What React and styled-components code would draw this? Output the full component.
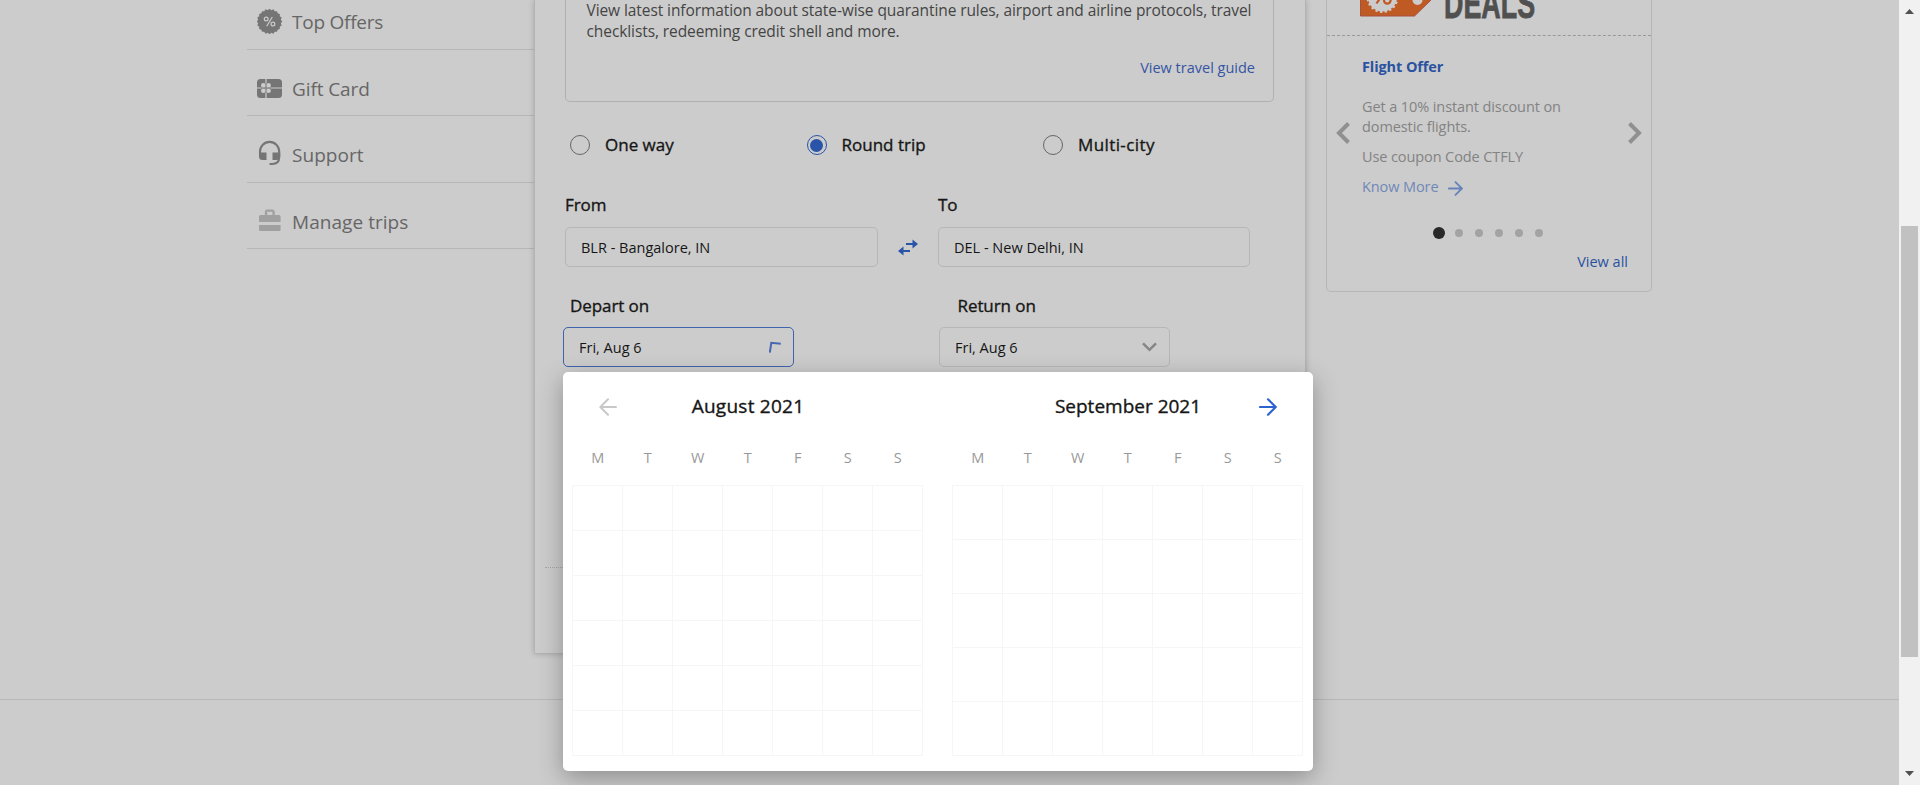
import React from 'react';
import styled, { createGlobalStyle, css } from 'styled-components';

const GlobalStyle = createGlobalStyle`
  * { box-sizing: border-box; }
  body { margin: 0; background: #ccc; overflow: hidden; }
`;

const semibold = css`
  font-weight: 500;
  -webkit-text-stroke: 0.35px currentColor;
`;

const Page = styled.div`
  position: relative;
  display: flex;
  width: 1920px;
  height: 785px;
  overflow: hidden;
  background: #ccc;
  color: #161616;
  font-family: 'Open Sans', 'Noto Sans', sans-serif;
  white-space: nowrap;
`;

const Main = styled.main`
  width: 1899px;
`;

const Columns = styled.div`
  display: flex;
  align-items: flex-start;
  height: 700px;
  padding-left: 247px;
  border-bottom: 1px solid #b8b8b8;
`;

const Sidebar = styled.nav`
  width: 287px;
`;

const NavItem = styled.a`
  display: flex;
  align-items: center;
  height: ${(p) => p.$height}px;
  padding: ${(p) => p.$top}px 0 ${(p) => p.$bottom || 0}px 10px;
  border-bottom: 1px solid #b6b6b6;
  color: #666;
  font-size: 19px;
  line-height: 26px;
  letter-spacing: ${(p) => p.$spacing}px;

  svg { margin: 0 9px ${(p) => p.$lift || 0}px 0; flex: none; }
`;

const SearchCard = styled.section`
  width: 772px;
  height: 654px;
  padding-left: 30px;
  border: 1px solid #b4b4b4;
  border-top: 0;
  box-shadow: 0 0 6px rgba(0, 0, 0, 0.2);
`;

const GuideBox = styled.div`
  width: 709px;
  height: 102px;
  padding: 0 18px 0 20.5px;
  border: 1px solid #b0b0b0;
  border-top: 0;
  border-radius: 0 0 5px 5px;
`;

const GuideText = styled.p`
  margin: 0;
  color: #444;
  font-size: 15.5px;
  line-height: 21px;
  letter-spacing: -0.085px;
`;

const GuideLink = styled.a`
  display: block;
  margin-top: 16px;
  color: #3555a4;
  font-size: 14.5px;
  line-height: 20px;
  text-align: right;
`;

const TripTypes = styled.div`
  display: flex;
  margin-top: 33px;
  padding-left: 5px;
`;

const TripType = styled.label`
  display: flex;
  align-items: center;
  gap: 15px;
  width: 236.5px;
  height: 20px;
  font-size: 17px;
  line-height: 20px;
  letter-spacing: ${(p) => p.$spacing || 0}px;
  ${semibold}
`;

const Radio = styled.span`
  width: 20px;
  height: 20px;
  padding: 2.5px;
  border: 1px solid ${(p) => (p.$checked ? '#2a54a8' : '#666')};
  border-radius: 50%;

  &::after {
    content: '';
    display: block;
    width: 13px;
    height: 13px;
    border-radius: 50%;
    background: ${(p) => (p.$checked ? '#2a54a8' : 'transparent')};
  }
`;

const RouteRow = styled.div`
  display: grid;
  grid-template-columns: 313px 60px 312px;
  align-items: end;
  margin-top: 38px;
`;

const DateRow = styled.div`
  display: flex;
  gap: 145px;
  margin: 27px 0 0 -2px;
`;

const FieldGroup = styled.div`
  width: ${(p) => p.$width}px;
`;

const FieldLabel = styled.div`
  height: 24px;
  margin-bottom: ${(p) => p.$gap || 9}px;
  padding-left: ${(p) => p.$indent || 0}px;
  font-size: 17px;
  line-height: 24px;
  letter-spacing: -0.08px;
  ${semibold}
`;

const Field = styled.div`
  display: flex;
  align-items: center;
  justify-content: space-between;
  height: 40px;
  padding: 0 12px 0 15px;
  border: 1px solid ${(p) => (p.$active ? '#3f63ad' : '#b6b6b6')};
  border-radius: 5px;
  font-size: 14.5px;
`;

const SwapButton = styled.div`
  display: flex;
  align-items: center;
  justify-content: center;
  height: 40px;
`;

const Divider = styled.div`
  width: 750px;
  margin: 200px 0 0 -20px;
  border-top: 1px dotted #a6a6a6;
`;

const OffersCard = styled.aside`
  width: 326px;
  height: 292px;
  margin-left: 20px;
  border: 1px solid #b6b6b6;
  border-top: 0;
  border-radius: 0 0 5px 5px;
`;

const OffersHeader = styled.div`
  display: flex;
  height: 36px;
  padding-left: 33px;
  overflow: hidden;
  border-bottom: 1px dashed #989898;
`;

const DealsWord = styled.span`
  display: block;
  height: 50px;
  margin: -22px 0 0 12px;
  color: #505050;
  font: bold 43px/50px 'Liberation Sans', Arial, sans-serif;
  transform: scaleX(0.625);
  transform-origin: left center;
  -webkit-text-stroke: 0.8px currentColor;
`;

const OffersBody = styled.div`
  display: flex;
  height: 182px;
  padding: 0 9px;
`;

const SlideArrow = styled.button`
  display: flex;
  width: 26px;
  height: 22px;
  margin: 86px 0 0;
  padding: 0;
  border: 0;
  background: none;
  justify-content: ${(p) => (p.$right ? 'flex-end' : 'flex-start')};
`;

const Offer = styled.div`
  flex: 1;
  color: #838383;
  font-size: 14.5px;
  line-height: 20px;
  letter-spacing: -0.1px;
`;

const OfferTitle = styled.div`
  margin: 21px 0 20px;
  color: #2a52a0;
  font-weight: 700;
`;

const OfferText = styled.p`
  margin: 0 0 10px;
`;

const OfferLink = styled.a`
  display: flex;
  align-items: center;
  gap: 10px;
  color: #7088b8;

  svg { margin-top: 2px; }
`;

const Dots = styled.div`
  display: flex;
  align-items: center;
  gap: 12px;
  height: 12px;
  margin: 9px 0 0 106px;
`;

const Dot = styled.span`
  width: ${(p) => (p.$active ? 12 : 8)}px;
  height: ${(p) => (p.$active ? 12 : 8)}px;
  margin-right: ${(p) => (p.$active ? -2 : 0)}px;
  border-radius: 50%;
  background: ${(p) => (p.$active ? '#292929' : '#a3a3a3')};
`;

const ViewAll = styled.a`
  display: block;
  margin-top: 13px;
  padding-right: 23px;
  color: #2a52a0;
  font-size: 14.5px;
  line-height: 20px;
  text-align: right;
`;

const DatePicker = styled.div`
  position: absolute;
  top: 372px;
  left: 563px;
  display: flex;
  gap: 29px;
  width: 750px;
  height: 399px;
  padding: 20px 9px 0;
  border-radius: 5px;
  background: #fff;
  box-shadow: 0 7px 24px rgba(0, 0, 0, 0.3);
`;

const Month = styled.div`
  width: 351px;
`;

const MonthHeader = styled.div`
  display: grid;
  grid-template-columns: 1fr auto 1fr;
  align-items: center;
  height: 28px;
  padding: 0 26px 0 27px;
  font-size: 19px;
  letter-spacing: ${(p) => p.$spacing}px;
  ${semibold}

  span { grid-column: 2; }
  svg { display: block; margin-top: 2px; }
  svg:last-child:not(:first-child) { grid-column: 3; justify-self: end; }
`;

const Weekdays = styled.div`
  display: grid;
  grid-template-columns: repeat(7, 50px);
  margin: 28px 0 17px 0.75px;
  color: #999;
  font-size: 14.5px;
  line-height: 20px;
  text-align: center;
`;

const Days = styled.div`
  display: grid;
  grid-template-columns: repeat(7, 50px);
  grid-auto-rows: 1fr;
  height: 271px;
  border: solid #f6f6f6;
  border-width: 0 1px 1px 0;
`;

const Day = styled.div`
  border: solid #f6f6f6;
  border-width: 1px 0 0 1px;
`;

const ScrollTrack = styled.div`
  display: flex;
  flex-direction: column;
  align-items: center;
  justify-content: space-between;
  width: 21px;
  padding: 9px 0;
  background: #f1f1f1;
`;

const ScrollThumb = styled.div`
  width: 17px;
  height: 431px;
  margin-top: 98px;
  background: #c1c1c1;
`;

const badgePoints = Array.from({ length: 40 }, (_, i) => {
  const r = i % 2 ? 11.5 : 12.8;
  const a = (i * Math.PI) / 20;
  return `${12.5 + r * Math.sin(a)},${12.5 - r * Math.cos(a)}`;
}).join(' ');

const OffersIcon = () => (
  <svg width="26" height="25" viewBox="0 0 26 25">
    <polygon points={badgePoints} fill="#757575" />
    <g fill="none" stroke="#ccc" strokeWidth="1.2">
      <circle cx="9.2" cy="10" r="1.9" />
      <circle cx="15.9" cy="15" r="1.9" />
      <path d="M15.3 8l-5.6 9.3" />
    </g>
  </svg>
);

const GiftIcon = () => (
  <svg width="26" height="19" viewBox="0 0 26 19">
    <rect width="25" height="19" rx="3.5" fill="#757575" />
    <path d="M9 0v19M0 9h25" stroke="#ccc" strokeWidth="1.2" />
    <g fill="#ccc">
      <circle cx="6.3" cy="6.4" r="2.3" />
      <circle cx="11.6" cy="6.4" r="2.3" />
      <circle cx="6.3" cy="11.7" r="2.3" />
      <circle cx="11.6" cy="11.7" r="2.3" />
    </g>
    <path d="M9 4v10M4 9h10" stroke="#757575" strokeWidth=".8" />
  </svg>
);

const HeadsetIcon = () => (
  <svg width="26" height="26" viewBox="0 0 26 26">
    <path d="M3 13v-1.500a9.600 9.600 0 0 1 19.200 0V17c0 4.500-2.500 7-7 7H12.600" fill="none" stroke="#757575" strokeWidth="2.100" />
    <path d="M2 12.500h7.500V20H5.500A3.500 3.500 0 0 1 2 16.500zM15.500 12.500h7.700v4a3.500 3.500 0 0 1-3.500 3.500h-4.200z" fill="#757575" />
  </svg>
);

const BagIcon = () => (
  <svg width="26" height="23" viewBox="0 0 26 23">
    <path d="M9 7V3q0-1.300 1.300-1.300h5q1.300 0 1.300 1.300v4" fill="none" stroke="#a0a0a0" strokeWidth="2.300" />
    <path d="M3.500 6h18.600q1.500 0 1.500 1.500V13H2V7.500Q2 6 3.500 6zM2 16h21.600v4.500q0 1.500-1.500 1.500H3.500Q2 22 2 20.500z" fill="#a0a0a0" />
  </svg>
);

const SwapIcon = () => (
  <svg width="20" height="17" viewBox="0 0 20 17">
    <path d="M8 4h6.500V.5L20 5l-5.500 4.500V6H8zM12 11H5.500V7.500L0 12l5.500 4.500V13H12z" fill="#2a54a8" />
  </svg>
);

const Arrow = ({ width, height, color, stroke = 2, left }) => (
  <svg width={width} height={height} viewBox="0 0 18 18">
    <path
      d={left ? 'M17 9H1.500M9 1.300L1.300 9 9 16.700' : 'M1 9h15.500M9 1.300L16.700 9 9 16.700'}
      fill="none"
      stroke={color}
      strokeWidth={stroke}
      strokeLinecap="round"
    />
  </svg>
);

const Chevron = ({ right }) => (
  <svg width="14" height="22" viewBox="0 0 14 22">
    <path d={right ? 'M1.500 1.500L11 11l-9.500 9.500' : 'M12.500 1.500L3 11l9.500 9.500'} fill="none" stroke="#909090" strokeWidth="4" />
  </svg>
);

const TurningCaret = () => (
  <svg width="12" height="12" viewBox="0 0 12 12">
    <path d="M.8 11.500L2.300 1.800l9.500 1" fill="none" stroke="#4668b0" strokeWidth="2" />
  </svg>
);

const DownCaret = () => (
  <svg width="15" height="10" viewBox="0 0 15 10">
    <path d="M1 1.300L7.500 7.800 14 1.300" fill="none" stroke="#858585" strokeWidth="2.400" />
  </svg>
);

const DealsTag = () => (
  <svg width="72" height="17" viewBox="0 0 72 17">
    <path d="M.5-20H71V0L54.500 16H.5z" fill="#c05a24" stroke="#a65040" />
    <circle cx="22.500" cy="-3" r="14.600" fill="#ccc" />
    <circle cx="22.500" cy="-3" r="15" fill="none" stroke="#ccc" strokeWidth="2" strokeDasharray="2.360 2.360" />
    <circle cx="57.500" cy="0" r="5" fill="#ccc" />
    <g fill="none" stroke="#c05a24" strokeWidth="2.200">
      <circle cx="27.300" cy="0.300" r="3.300" />
      <path d="M16.500 3.500L27-12" />
    </g>
  </svg>
);

const ScrollArrow = ({ down }) => (
  <svg width="9" height="5" viewBox="0 0 9 5">
    <path d={down ? 'M0 0h9L4.500 5z' : 'M4.500 0L9 5H0z'} fill="#505050" />
  </svg>
);

const navItems = [
  { label: 'Top Offers', Icon: OffersIcon, height: 50, top: 0, bottom: 5, lift: 1, spacing: -0.25 },
  { label: 'Gift Card', Icon: GiftIcon, height: 66, top: 12, lift: 1, spacing: -0.1 },
  { label: 'Support', Icon: HeadsetIcon, height: 67, top: 11, lift: 3, spacing: 0.05 },
  { label: 'Manage trips', Icon: BagIcon, height: 66, top: 12, lift: 3, spacing: 0.05 },
];

const tripTypes = [
  { label: 'One way' },
  { label: 'Round trip', checked: true },
  { label: 'Multi-city', spacing: 0.4 },
];

const weekdays = ['M', 'T', 'W', 'T', 'F', 'S', 'S'];

function MonthView({ title, weeks, spacing, previous, next }) {
  return (
    <Month>
      <MonthHeader $spacing={spacing}>
        {previous && <Arrow width={18} height={18} color="#c8c8c8" left />}
        <span>{title}</span>
        {next && <Arrow width={18} height={18} color="#2d62d3" stroke={2.2} />}
      </MonthHeader>
      <Weekdays>{weekdays.map((d, i) => <span key={i}>{d}</span>)}</Weekdays>
      <Days>{Array.from({ length: weeks * 7 }, (_, i) => <Day key={i} />)}</Days>
    </Month>
  );
}

export default function App() {
  return (
    <Page>
      <GlobalStyle />
      <Main>
        <Columns>
          <Sidebar>
            {navItems.map(({ label, Icon, height, top, bottom, lift, spacing }) => (
              <NavItem key={label} $height={height} $top={top} $bottom={bottom} $lift={lift} $spacing={spacing}>
                <Icon />
                {label}
              </NavItem>
            ))}
          </Sidebar>

          <SearchCard>
            <GuideBox>
              <GuideText>
                View latest information about state-wise quarantine rules, airport and airline protocols, travel
                <br />
                checklists, redeeming credit shell and more.
              </GuideText>
              <GuideLink>View travel guide</GuideLink>
            </GuideBox>
            <TripTypes>
              {tripTypes.map(({ label, checked, spacing }) => (
                <TripType key={label} $spacing={spacing}>
                  <Radio $checked={checked} />
                  {label}
                </TripType>
              ))}
            </TripTypes>
            <RouteRow>
              <FieldGroup $width={313}>
                <FieldLabel $gap={10}>From</FieldLabel>
                <Field>BLR - Bangalore, IN</Field>
              </FieldGroup>
              <SwapButton><SwapIcon /></SwapButton>
              <FieldGroup $width={312}>
                <FieldLabel $gap={10}>To</FieldLabel>
                <Field>DEL - New Delhi, IN</Field>
              </FieldGroup>
            </RouteRow>
            <DateRow>
              <FieldGroup $width={231}>
                <FieldLabel $indent={7}>Depart on</FieldLabel>
                <Field $active>Fri, Aug 6<TurningCaret /></Field>
              </FieldGroup>
              <FieldGroup $width={231}>
                <FieldLabel $indent={18.5}>Return on</FieldLabel>
                <Field>Fri, Aug 6<DownCaret /></Field>
              </FieldGroup>
            </DateRow>
            <Divider />
          </SearchCard>

          <OffersCard>
            <OffersHeader>
              <DealsTag />
              <DealsWord>DEALS</DealsWord>
            </OffersHeader>
            <OffersBody>
              <SlideArrow><Chevron /></SlideArrow>
              <Offer>
                <OfferTitle>Flight Offer</OfferTitle>
                <OfferText>Get a 10% instant discount on<br />domestic flights.</OfferText>
                <OfferText>Use coupon Code CTFLY</OfferText>
                <OfferLink>Know More <Arrow width={15} height={15} color="#6883bb" stroke={2.2} /></OfferLink>
              </Offer>
              <SlideArrow $right><Chevron right /></SlideArrow>
            </OffersBody>
            <Dots>{[0, 1, 2, 3, 4, 5].map((i) => <Dot key={i} $active={i === 0} />)}</Dots>
            <ViewAll>View all</ViewAll>
          </OffersCard>
        </Columns>
      </Main>

      <ScrollTrack>
        <ScrollArrow />
        <ScrollThumb />
        <ScrollArrow down />
      </ScrollTrack>

      <DatePicker>
        <MonthView title="August 2021" weeks={6} spacing={0.25} previous />
        <MonthView title="September 2021" weeks={5} spacing={0} next />
      </DatePicker>
    </Page>
  );
}
